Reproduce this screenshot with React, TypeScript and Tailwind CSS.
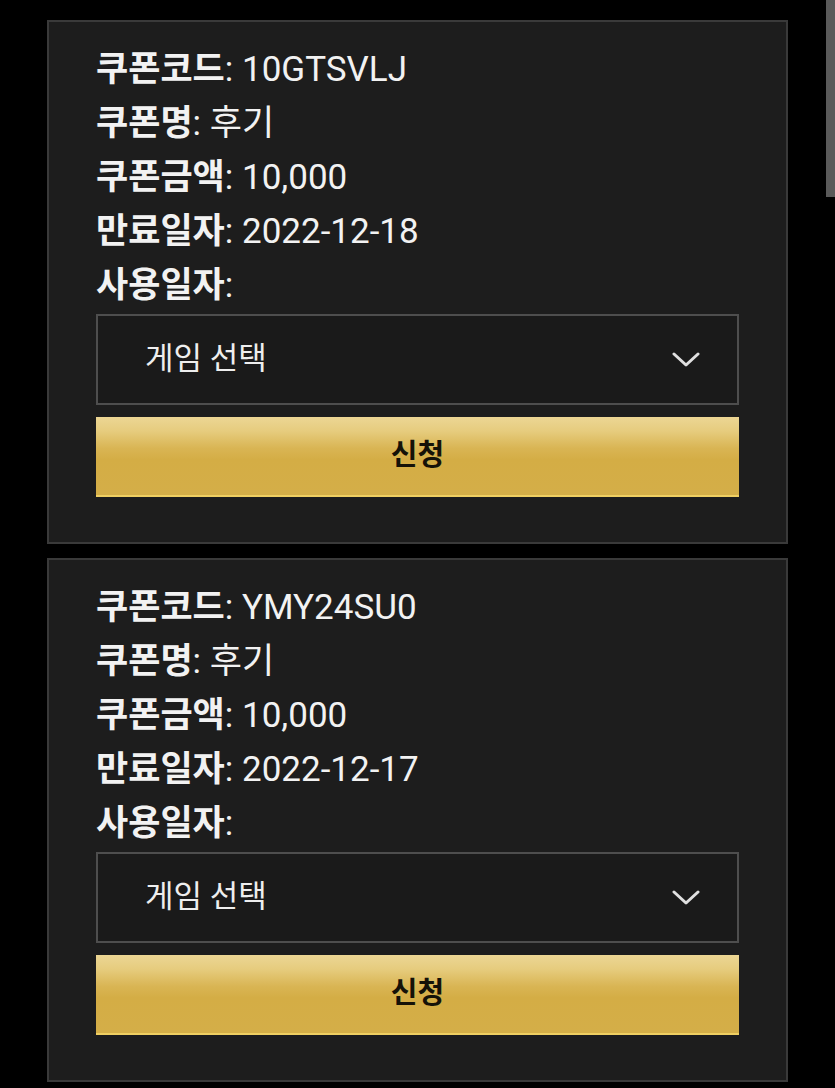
import React from 'react';

type Coupon = {
    code: string;
    name: string;
    amount: string;
    expires: string;
};

const coupons: Coupon[] = [
    { code: '10GTSVLJ', name: '후기', amount: '10,000', expires: '2022-12-18' },
    { code: 'YMY24SU0', name: '후기', amount: '10,000', expires: '2022-12-17' },
];

const Row = ({ label, value }: { label: string; value?: string }) => (
    <div className="h-[54px] flex items-center whitespace-nowrap">
        <span className="font-bold">{label}</span>
        <span>:{value ? ` ${value}` : ''}</span>
    </div>
);

const CouponCard = ({ coupon }: { coupon: Coupon }) => (
    <div className="border-2 border-[#3a3a3a] bg-[#1d1d1d] px-[47px] pt-[21px] pb-[45px]">
        {/* 쿠폰 정보 */}
        <div className="text-[35px] text-[#f2f2f2]">
            <Row label="쿠폰코드" value={coupon.code} />
            <Row label="쿠폰명" value={coupon.name} />
            <Row label="쿠폰금액" value={coupon.amount} />
            <Row label="만료일자" value={coupon.expires} />
            <Row label="사용일자" />
        </div>

        {/* 게임 선택 */}
        <div className="mt-px h-[91px] border-2 border-[#4e4e4e] bg-[#1a1a1a] flex items-center justify-between pl-[47px] pr-[37px]">
            <span className="text-[31px] text-[#eeeeee]">게임 선택</span>
            <svg width="28" height="18" viewBox="0 0 28 18" fill="none">
                <path d="M2 3 L14 14 L26 3" stroke="#e0e0e0" strokeWidth="3" strokeLinecap="round" strokeLinejoin="round" />
            </svg>
        </div>

        <button
            type="button"
            className="mt-3 w-full h-[80px] flex items-center justify-center border-b-2 border-[#efcf62] bg-[linear-gradient(to_bottom,#ecd694_0%,#e6cc7e_18%,#d9b554_40%,#d4ad45_55%,#d4ae48_100%)] text-[29px] font-bold text-[#151208]"
        >
            신청
        </button>
    </div>
);

export default function App() {
    return (
        <div
            className="relative min-h-screen bg-black pt-5 px-[47px] flex flex-col gap-[14px]"
            style={{ fontFamily: 'Roboto, "Noto Sans CJK KR", sans-serif' }}
        >
            {coupons.map((c) => (
                <CouponCard key={c.code} coupon={c} />
            ))}

            {/* 스크롤바 */}
            <div className="fixed top-0 right-0 w-[9px] h-[197px] bg-[#5a5a5a]" />
        </div>
    );
}
